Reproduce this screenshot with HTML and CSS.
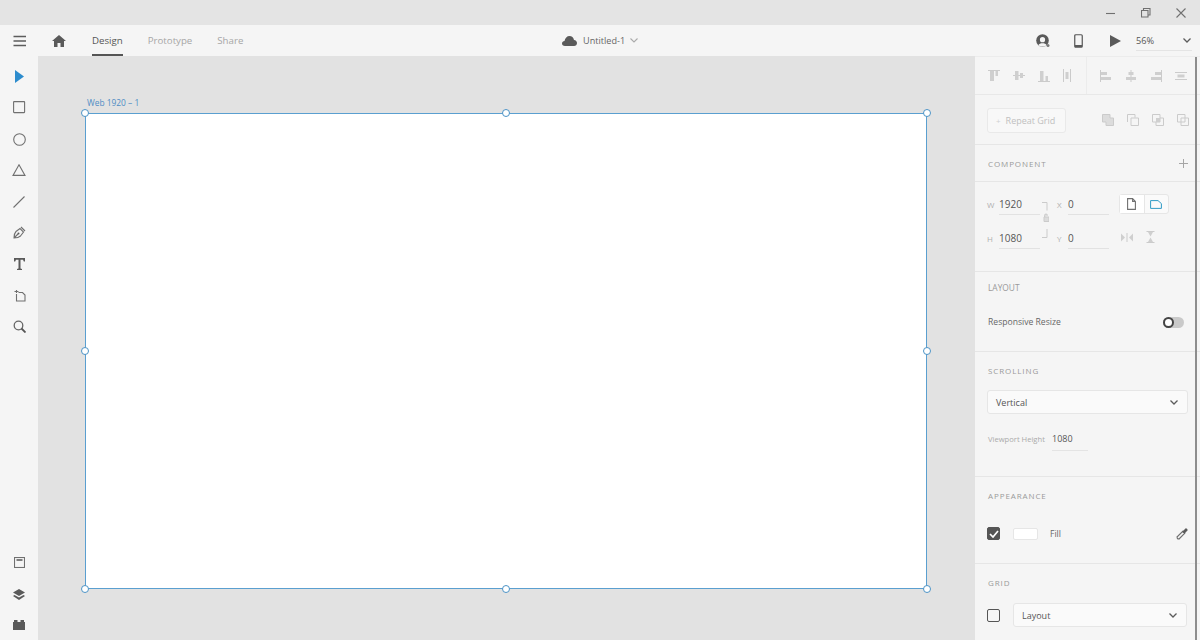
FILE: index.html
```html
<!DOCTYPE html>
<html lang="en">
<head>
<meta charset="utf-8">
<title>Untitled-1</title>
<link rel="stylesheet" href="styles.css">
</head>
<body>
<div class="app">
  <header class="titlebar">
    <svg class="win" width="10" height="10" viewBox="0 0 10 10"><path d="M0 5.500h9" class="ln"/></svg>
    <svg class="win" width="10" height="10" viewBox="0 0 10 10"><path d="M.5 2.500h6.500v6.500h-6.500zM2.500 2.500v-2h6.500v6.500h-2" class="ln"/></svg>
    <svg class="win" width="10" height="10" viewBox="0 0 10 10"><path d="M.5.500l9 9M9.500.5l-9 9" class="ln"/></svg>
  </header>
  <nav class="toolbar">
    <div class="tb-left">
      <svg class="burger" width="14" height="12" viewBox="0 0 14 12"><path d="M.5 1.500h12.500M.5 6h12.500M.5 10.500h12.500" class="ln dark"/></svg>
      <svg class="home" width="14" height="12" viewBox="0 0 14 12"><path d="M7 0l7 6h-2v6H8.500V8h-3v4H2V6H0z" class="fill"/></svg>
      <div class="tabs">
        <span class="tab active">Design</span>
        <span class="tab">Prototype</span>
        <span class="tab">Share</span>
      </div>
    </div>
    <div class="doc">
      <svg width="15" height="10" viewBox="0 0 15 10"><path d="M3 10C1 10 0 8.800 0 7.500 0 6 1.200 5 2.500 5 3 2 5 0 7.500 0c2.300 0 4 1.500 4.500 4 1.800.2 3 1.500 3 3 0 1.700-1.300 3-3 3z" class="fill"/></svg>
      <span class="doc-name">Untitled-1</span>
      <svg width="8" height="5" viewBox="0 0 8 5"><path d="M.5.500L4 4l3.500-3.500" class="ln light"/></svg>
    </div>
    <div class="tb-right">
      <svg width="14" height="14" viewBox="0 0 14 14"><circle cx="6.500" cy="6.500" r="6.300" class="fill"/><circle cx="6.500" cy="5.700" r="2.600" fill="#f5f5f5"/><path d="M2.500 11c.8-2.200 7.200-2.200 8 0l-1.500 1.500H4z" fill="#f5f5f5"/><circle cx="12" cy="11.500" r="1.500" fill="#777"/></svg>
      <svg width="9" height="14" viewBox="0 0 9 14"><rect x=".75" y=".75" width="7.500" height="12.500" rx="1" fill="none" stroke="#555" stroke-width="1.200"/><path d="M1 11h7v2H1z" class="fill"/></svg>
      <svg width="11" height="12" viewBox="0 0 11 12"><path d="M0 0l11 6-11 6z" class="fill"/></svg>
      <div class="zoom"><span>56%</span><svg width="8" height="5" viewBox="0 0 8 5"><path d="M.5.500L4 4l3.500-3.500" class="ln dark"/></svg></div>
    </div>
  </nav>
  <main class="workspace">
    <aside class="rail">
      <div class="tools">
        <svg width="9" height="13" viewBox="0 0 9 13"><path d="M0 0l9 6.500L0 13z" fill="#2d8ccd"/></svg>
        <svg width="13" height="13" viewBox="0 0 13 13"><rect x=".6" y=".6" width="11" height="11" rx=".5" class="ln"/></svg>
        <svg width="13" height="13" viewBox="0 0 13 13"><circle cx="6.500" cy="6.500" r="5.800" class="ln"/></svg>
        <svg width="14" height="12" viewBox="0 0 14 12"><path d="M7 .8l6 10.600H1z" class="ln"/></svg>
        <svg width="12" height="12" viewBox="0 0 12 12"><path d="M.5 11.500l11-11" class="ln"/></svg>
        <svg width="13" height="13" viewBox="0 0 13 13"><path d="M1 12c0-3 .5-5 2-6.500L7 2.500l3.500 3.500-3 4C6 11.500 4 12 1 12zM1 12l4-4M8 1l4 4" class="ln"/><circle cx="5.500" cy="7.500" r="1" class="fill"/></svg>
        <svg width="11" height="12" viewBox="0 0 11 12"><path d="M0 0h11v3.500h-1.200L9 1.700H6.500v8.800l1.500.4V12H3v-1.100l1.500-.4V1.700H2l-.8 1.800H0z" class="fill"/></svg>
        <svg width="13" height="13" viewBox="0 0 13 13"><path d="M3.500 1v3M1.500 2.500h4M5.500 3.500h4l2.500 2.500v6H3.500V5" class="ln"/></svg>
        <svg width="13" height="13" viewBox="0 0 13 13"><circle cx="5.500" cy="5.500" r="4.300" fill="none" stroke="#666" stroke-width="1.300"/><path d="M8.500 8.500l4 4" fill="none" stroke="#555" stroke-width="1.800"/></svg>
      </div>
      <div class="tools tools-end">
        <svg width="11" height="11" viewBox="0 0 11 11"><rect x=".5" y=".5" width="10" height="10" class="ln"/><path d="M2.500 3h6" fill="none" stroke="#555" stroke-width="1.500"/></svg>
        <svg width="12" height="11" viewBox="0 0 12 11"><path d="M6 0l6 3.500L6 7 0 3.500zM1.500 6L6 8.500 10.500 6 12 7 6 11 0 7z" class="fill"/></svg>
        <svg width="12" height="10" viewBox="0 0 12 10"><path d="M0 2h1V0h3.500v2h3V0H11v2h1v8H0z" class="fill"/></svg>
      </div>
    </aside>
    <section class="canvas">
      <div class="board-label">Web 1920 – 1</div>
      <div class="artboard">
        <i class="h tl"></i><i class="h tc"></i><i class="h tr"></i>
        <i class="h ml"></i><i class="h mr"></i>
        <i class="h bl"></i><i class="h bc"></i><i class="h br"></i>
      </div>
    </section>
    <aside class="panel">
      <div class="sec align">
        <div class="align-a">
          <svg width="12" height="12" viewBox="0 0 12 12"><path d="M0 .5h12" class="ic"/><path d="M2 1h4v10H2zM7.500 1H10v5H7.500z" class="icf"/></svg>
          <svg width="12" height="11" viewBox="0 0 12 11"><path d="M0 5.500h12" class="ic"/><path d="M2 1h3.500v9H2zM7 3h3v5H7z" class="icf"/></svg>
          <svg width="12" height="12" viewBox="0 0 12 12"><path d="M0 11.500h12" class="ic"/><path d="M2 1h3.500v10H2zM7.500 6H10v5H7.500z" class="icf"/></svg>
          <svg width="8" height="13" viewBox="0 0 8 13"><path d="M.5 0v13M7.500 0v13" class="ic"/><path d="M2.500 3h3v7h-3z" class="icf"/></svg>
        </div>
        <div class="align-b">
          <svg width="12" height="12" viewBox="0 0 12 12"><path d="M.5 0v12" class="ic"/><path d="M1 2h6v3H1zM1 7h10v3H1z" class="icf"/></svg>
          <svg width="12" height="12" viewBox="0 0 12 12"><path d="M6 0v12" class="ic"/><path d="M3.500 2h5v3h-5zM1 7h10v3H1z" class="icf"/></svg>
          <svg width="12" height="12" viewBox="0 0 12 12"><path d="M11.500 0v12" class="ic"/><path d="M5 2h6v3H5zM1 7h10v3H1z" class="icf"/></svg>
          <svg width="12" height="8" viewBox="0 0 12 8"><path d="M0 .5h12M0 7.500h12" class="ic"/><path d="M2.500 2.500h7v3h-7z" class="icf"/></svg>
        </div>
      </div>
      <div class="sec repeat">
        <div class="btn-repeat"><span class="plus">+</span><span>Repeat Grid</span></div>
        <div class="bool">
          <svg width="12" height="12" viewBox="0 0 12 12"><path d="M.5.500h7.500v3.500h3.500v7.500H4V8H.5z" class="ic icfill"/></svg>
          <svg width="12" height="12" viewBox="0 0 12 12"><path d="M.5 8V.5H8v3M4 4h7.500v7.500H4z" class="ic"/></svg>
          <svg width="12" height="12" viewBox="0 0 12 12"><path d="M.5.500H8V8H.5zM4 8v3.500h7.500V4H8" class="ic"/><path d="M4 4h4v4H4z" class="icf"/></svg>
          <svg width="12" height="12" viewBox="0 0 12 12"><path d="M.5.500H8V8H.5zM4 4h7.500v7.500H4z" class="ic"/></svg>
        </div>
      </div>
      <div class="sec component">
        <span class="heading">COMPONENT</span>
        <svg width="9" height="9" viewBox="0 0 9 9"><path d="M4.500 0v9M0 4.500h9" class="ic dk"/></svg>
      </div>
      <div class="sec transform">
        <div class="fields">
          <div class="row">
            <label class="fld"><span class="k">W</span><span class="v w1">1920</span></label>
            <label class="fld"><span class="k x">X</span><span class="v w2">0</span></label>
          </div>
          <div class="row">
            <label class="fld"><span class="k">H</span><span class="v w1">1080</span></label>
            <label class="fld"><span class="k x">Y</span><span class="v w2">0</span></label>
          </div>
          <div class="lock">
            <svg width="7" height="36" viewBox="0 0 7 36"><path d="M0 .5h5v8M5 27v8.500H0" class="ic"/><path d="M2.500 15v-1.500a1.500 1.500 0 0 1 3 0M2 15h5v4.500H2z" class="ic icfill"/></svg>
          </div>
        </div>
        <div class="side">
          <div class="orient">
            <span class="seg"><svg width="9" height="12" viewBox="0 0 9 12"><path d="M.6.600h5l2.800 2.800v8H.6zM5.600.6v2.800h2.800" class="ln"/></svg></span>
            <span class="seg"><svg width="12" height="9" viewBox="0 0 12 9"><path d="M.6.600h7.400l3.400 3v4.800H.6z" fill="none" stroke="#2f9bc5"/></svg></span>
          </div>
          <div class="flip">
            <svg width="12" height="9" viewBox="0 0 12 9"><path d="M0 .5l4 4-4 4zM12 .5l-4 4 4 4z" class="icf"/><path d="M6 0v9" class="ic"/></svg>
            <svg width="9" height="12" viewBox="0 0 9 12"><path d="M.5.500h8M.5 11.500h8" class="ic"/><path d="M2 1h5L4.500 5.500zM2 11h5L4.500 6.500z" class="icf"/></svg>
          </div>
        </div>
      </div>
      <div class="sec layout">
        <span class="heading plain">LAYOUT</span>
        <div class="line">
          <span class="lbl">Responsive Resize</span>
          <span class="toggle"><i></i></span>
        </div>
      </div>
      <div class="sec scrolling">
        <span class="heading">SCROLLING</span>
        <div class="select full"><span>Vertical</span><svg width="8" height="5" viewBox="0 0 8 5"><path d="M.5.500L4 4l3.500-3.500" class="ln dark"/></svg></div>
        <div class="viewport"><span class="vp-k">Viewport Height</span><span class="vp-v">1080</span></div>
      </div>
      <div class="sec appearance">
        <span class="heading">APPEARANCE</span>
        <div class="fill-row">
          <span class="check on"><svg width="10" height="8" viewBox="0 0 10 8"><path d="M1 4l3 3 5-6" fill="none" stroke="#fff" stroke-width="1.700"/></svg></span>
          <span class="swatch"></span>
          <span class="lbl fill-lbl">Fill</span>
          <svg class="dropper" width="12" height="12" viewBox="0 0 12 12"><path d="M1.500 10.500l-.5.500M1.500 10.500L1 9l5.500-5.500 2 2L3 11z" class="ln"/><path d="M6 3l1.500-.5L9.500.5c.7-.7 2.700 1.300 2 2L9.500 4.500 9 6z" class="fill"/></svg>
        </div>
      </div>
      <div class="sec grid">
        <span class="heading">GRID</span>
        <div class="fill-row grid-row">
          <span class="check"></span>
          <div class="select wide"><span>Layout</span><svg width="8" height="5" viewBox="0 0 8 5"><path d="M.5.500L4 4l3.500-3.500" class="ln dark"/></svg></div>
        </div>
      </div>
      <div class="scrollbar"></div>
    </aside>
  </main>
</div>
</body>
</html>
```

FILE: styles.css
```css
* { box-sizing: border-box; }
html, body { margin: 0; height: 100%; overflow: hidden; }
body { font-family: "Open Sans", "Noto Sans", sans-serif; color: #555; background: #e2e2e2; }
svg { display: block; flex: none; }
.ln { fill: none; stroke: #707070; stroke-width: 1.100; }
.ln.dark { stroke: #5c5c5c; stroke-width: 1.300; }
.ln.light { stroke: #aaa; }
.fill { fill: #5a5a5a; }
.ic { fill: none; stroke: #cbcbcb; stroke-width: 1; }
.ic.dk { stroke: #a5a5a5; }
.ic.icfill { fill: #dcdcdc; }
.icf { fill: #cfcfcf; }

.app { width: 1200px; height: 640px; display: flex; flex-direction: column; opacity: .999; }
.titlebar { height: 25px; background: #e4e4e4; display: flex; align-items: center; justify-content: flex-end; gap: 25px; padding-right: 14px; flex: none; }
.toolbar { height: 31px; background: #f5f5f5; display: flex; align-items: center; position: relative; flex: none; }
.tb-left { display: flex; align-items: center; padding-left: 13px; }
.burger { margin-right: 25px; }
.home { margin-right: 26px; }
.tabs { display: flex; gap: 25px; }
.tab { font-size: 9.700px; line-height: 31px; color: #a6a6a6; height: 31px; position: relative; }
.tab.active { color: #555; }
.tab.active::after { content: ""; position: absolute; left: 0; right: 0; bottom: 0; height: 2px; background: #555; }
.doc { position: absolute; left: 562px; top: 0; height: 31px; display: flex; align-items: center; }
.doc-name { font-size: 9.100px; color: #666; margin: 0 5px 0 6px; }
.tb-right { margin-left: auto; display: flex; align-items: center; padding-right: 8px; }
.tb-right > svg:nth-child(1) { margin-right: 24px; }
.tb-right > svg:nth-child(2) { margin-right: 27px; }
.tb-right > svg:nth-child(3) { margin-right: 15px; }
.zoom { width: 56px; height: 20px; padding-right: 1px; border-bottom: 1px solid #e4e4e4; display: flex; align-items: center; justify-content: space-between; font-size: 9.200px; color: #555; }

.workspace { flex: 1; display: flex; min-height: 0; }
.rail { width: 38px; background: #f5f5f5; display: flex; flex-direction: column; justify-content: space-between; flex: none; padding-top: 5px; }
.tools { display: grid; grid-auto-rows: 31.250px; justify-items: center; align-items: center; }
.tools-end { margin-bottom: -1px; }

.canvas { width: 937px; flex: none; background: #e2e2e2; padding: 41px 0 0 47px; position: relative; }
.board-label { font-size: 8.400px; line-height: 12px; height: 16px; color: #4f8dc4; padding-left: 2px; }
.artboard { width: 842px; height: 475.500px; background: #fff; border: 1.500px solid #5a9fd0; position: relative; }
.h { position: absolute; width: 8px; height: 8px; background: #fff; border: 1px solid #4c93c6; border-radius: 50%; }
.tl { left: -5px; top: -5px; }
.tc { left: 416px; top: -5px; }
.tr { right: -5px; top: -5px; }
.ml { left: -5px; top: 233px; }
.mr { right: -5px; top: 233px; }
.bl { left: -5px; bottom: -5px; }
.bc { left: 416px; bottom: -5px; }
.br { right: -5px; bottom: -5px; }

.panel { width: 225px; flex: none; background: #f5f5f5; position: relative; overflow: hidden; border-top: 1px solid #ececec; }
.scrollbar { position: absolute; right: 3px; top: 0; bottom: 0; width: 2.500px; background: #8d8d8d; }
.sec { border-bottom: 1px solid #e6e6e6; padding: 0 12px 0 13px; position: relative; }
.heading { font-size: 8px; letter-spacing: .9px; color: #9a9a9a; display: block; }
.heading.plain { letter-spacing: 0; font-size: 8.400px; }
.align { height: 38px; display: flex; padding: 0; border-bottom-color: #e8e8e8; }
.align-a { width: 112px; border-right: 1px solid #ececec; display: flex; align-items: center; gap: 13px; padding-left: 13px; }
.align-b { flex: 1; display: flex; align-items: center; gap: 13px; padding-left: 13px; }
.repeat { height: 50px; display: flex; align-items: center; }
.btn-repeat { flex: none; width: 79px; height: 25px; margin: 2px 0 0 -1px; background: #f8f8f8; border: 1px solid #e9e9e9; border-radius: 3px; font-size: 9px; color: #c0c0c0; display: flex; align-items: center; padding-left: 8px; gap: 5px; }
.plus { font-size: 8px; color: #d0d0d0; }
.bool { display: flex; gap: 13px; margin-left: 36px; }
.component { height: 37px; display: flex; align-items: center; justify-content: space-between; }
.transform { height: 90px; display: flex; padding-top: 9px; }
.fields { width: 131px; display: flex; flex-direction: column; gap: 9.500px; position: relative; }
.row { display: flex; height: 24px; }
.fld { display: flex; align-items: center; }
.k { font-size: 8px; color: #b0b0b0; width: 12px; margin-top: 3px; margin-left: -1px; }
.k.x { width: 11px; margin-left: 0; }
.v { font-size: 10px; color: #555; height: 24px; line-height: 26px; border-bottom: 1px solid #e2e2e2; }
.w1 { width: 41px; margin-right: 17px; }
.w2 { width: 41px; }
.lock { position: absolute; left: 54px; top: 11px; }
.orient { display: flex; width: 50px; height: 20px; margin-top: 3px; border: 1px solid #e6e6e6; border-radius: 3px; background: #fafafa; }
.seg { flex: 1; display: flex; align-items: center; justify-content: center; }
.seg:first-child { border-right: 1px solid #e6e6e6; background: #fff; }
.flip { display: flex; gap: 13px; margin: 17px 0 0 2px; align-items: center; }
.layout { height: 80px; padding-top: 10px; }
.line { display: flex; align-items: center; justify-content: space-between; margin-top: 23px; padding-right: 4px; }
.lbl { font-size: 8.600px; color: #666; }
.toggle { width: 21px; height: 11px; background: #c9c9c9; border-radius: 6px; position: relative; display: block; }
.toggle i { position: absolute; left: 0; top: 0; width: 11px; height: 11px; border-radius: 50%; border: 2px solid #444; background: #fff; }
.scrolling { height: 125px; padding-top: 13px; }
.select { height: 24px; background: #fafafa; border: 1px solid #e6e6e6; border-radius: 3px; display: flex; align-items: center; justify-content: space-between; font-size: 9px; color: #555; padding: 0 9px 0 8px; }
.full { width: 201px; margin: 14px 0 0 -1px; }
.viewport { display: flex; align-items: center; margin-top: 13px; }
.vp-k { font-size: 7.600px; color: #aaa; width: 64px; flex: none; }
.vp-v { font-size: 9px; color: #555; width: 36px; height: 24px; line-height: 24px; border-bottom: 1px solid #e4e4e4; }
.appearance { height: 87px; padding-top: 13px; }
.fill-row { display: flex; align-items: center; margin-top: 26px; }
.check { width: 13px; height: 13px; margin-left: -1px; border: 1.500px solid #555; border-radius: 2px; display: flex; align-items: center; justify-content: center; flex: none; }
.check.on { background: #555; }
.swatch { width: 25px; height: 12px; background: #fff; border: 1px solid #e6e6e6; border-radius: 2px; margin-left: 13px; }
.fill-lbl { margin-left: 12px; }
.dropper { margin-left: auto; }
.grid { border-bottom: 0; padding-top: 13px; }
.grid-row { margin-top: 15px; }
.wide { width: 174px; margin-left: 13px; }
```
